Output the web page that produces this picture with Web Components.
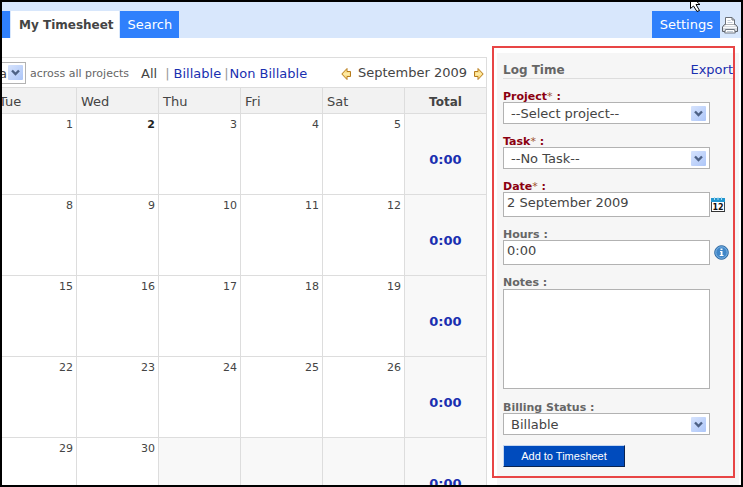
<!DOCTYPE html>
<html lang="en">
<head>
<meta charset="utf-8">
<title>My Timesheet</title>
<style>
  body {
    margin: 0;
    font-family: "DejaVu Sans", Verdana, sans-serif;
    font-size: 13px;
    line-height: 16px;
    color: #444;
    background: #fff;
    --link: #1a2fb0;
  }
</style>
</head>
<body>
<timesheet-app></timesheet-app>

<script>
const ICONS = {
  printer: `<svg width="16" height="18" viewBox="0 0 16 18">
    <path d="M3.500 9V1.500h6.500l2.500 2.500V9z" fill="#fff" stroke="#6b7078" />
    <path d="M10 1.500V4h2.500" fill="none" stroke="#6b7078" />
    <path d="M5.500 4.500h3M5.500 6.500h5" fill="none" stroke="#c3ccd8" />
    <path d="M2.500 8.500h11l2 2.500v4.500H.5V11z" fill="#d9dde3" stroke="#5c6169" stroke-linejoin="round" />
    <path d="M3.500 8.500h9v1.500h-9z" fill="#fff" />
    <path d="M1 11.500h14" stroke="#f7f9fb" />
    <path d="M3.500 13.500h9l.8 3.500H2.700z" fill="#fff" stroke="#6f7680" />
    <path d="M5 15.500h6" stroke="#c3ccd8" />
  </svg>`,
  prev: `<svg width="11" height="14" viewBox="0 0 11 14">
    <path d="M6 1.500L.8 7 6 12.500V9.500h3.500v-5H6z" fill="#fbe08a" stroke="#b67a1c" stroke-linejoin="round" />
    <path d="M3 7h5" stroke="#fff3c4" />
  </svg>`,
  next: `<svg width="11" height="14" viewBox="0 0 11 14">
    <path d="M5 1.500L10.200 7 5 12.500V9.500H1.500v-5H5z" fill="#fbe08a" stroke="#b67a1c" stroke-linejoin="round" />
    <path d="M3 7h5" stroke="#fff3c4" />
  </svg>`,
  calendar: `<svg width="14" height="15" viewBox="0 0 14 15">
    <rect x=".5" y="1.500" width="13" height="13" fill="#fff" stroke="#3b4650" />
    <rect x="0" y="1" width="14" height="4" fill="#2196cf" />
    <path d="M3.500 0v3M7 0v3M10.500 0v3" stroke="#a8dcf5" />
    <path d="M0 14.500h14" stroke="#333" />
    <text x="7" y="12.500" text-anchor="middle" font-family="DejaVu Sans" font-weight="bold" font-size="8" fill="#111">12</text>
  </svg>`,
  info: `<svg width="15" height="15" viewBox="0 0 15 15">
    <circle cx="7.500" cy="7.500" r="6.800" fill="#3f86c8" stroke="#2b669f" />
    <circle cx="7.500" cy="7.500" r="5.700" fill="none" stroke="#8fc0ea" stroke-width=".8" />
    <path d="M6.500 3.500h2v1.500h-2zM6 6h2.500v4h1v1H5.700v-1h1V7H6z" fill="#fff" />
  </svg>`,
  cursor: `<svg width="14" height="10" viewBox="0 0 14 10">
    <path d="M1.500 -6V6.500L4.500 4L8 9.500L10.500 8.500L7 2.500H11z" fill="#fff" stroke="#000" />
  </svg>`,
};

class UiIcon extends HTMLElement {
  constructor() {
    super();
    this.attachShadow({ mode: "open" });
  }

  connectedCallback() {
    this.shadowRoot.innerHTML = `
      <style>
        :host { display: inline-flex; flex: none; }
        svg { display: block; }
      </style>
      ${ICONS[this.getAttribute("name")] || ""}`;
  }
}

// Drop-down with a pale blue arrow button
class SelectBox extends HTMLElement {
  constructor() {
    super();
    this.attachShadow({ mode: "open" });
  }

  connectedCallback() {
    const label = this.getAttribute("label");
    this.shadowRoot.innerHTML = `
      <style>
        :host { display: block; }
        label { display: block; height: 13px; font-size: 11px; line-height: 15px; font-weight: bold; color: var(--label-color, #666); }
        label span { font-weight: normal; color: #a0522d; }
        .box { display: grid; align-items: center; }
        select, .arrow { grid-area: 1 / 1; }
        select {
          appearance: none;
          box-sizing: border-box;
          width: 100%;
          height: 22px;
          margin: 0;
          padding: 2px 22px 0 7px;
          border: 1px solid #b2b2b2;
          border-radius: 0;
          background: #fff;
          color: #444;
          font: inherit;
        }
        :host([compact]) select { padding: 2px 16px 0 4px; }
        .arrow { justify-self: end; margin-right: 4px; pointer-events: none; display: block; }
        :host([compact]) .arrow { margin-right: 3px; }
      </style>
      ${label ? `<label for="control">${label}${this.hasAttribute("required") ? "<span>*</span>" : ""} :</label>` : ""}
      <div class="box">
        <select id="control" ${label ? "" : 'aria-label="View"'}><option>${this.getAttribute("value")}</option></select>
        <svg class="arrow" width="15" height="15" viewBox="0 0 15 15">
          <defs><linearGradient id="g" x2="1" y2="1"><stop stop-color="#d6e3fd" /><stop offset="1" stop-color="#adc6f8" /></linearGradient></defs>
          <rect width="15" height="15" rx="1" fill="url(#g)" />
          <path d="M4 5.500l3.500 3.500L11 5.500" fill="none" stroke="#4d6185" stroke-width="2.400" />
        </svg>
      </div>`;
  }
}

// Label above an input or textarea, slotted icon on the right
class TextField extends HTMLElement {
  constructor() {
    super();
    this.attachShadow({ mode: "open" });
  }

  connectedCallback() {
    const control = this.hasAttribute("multiline")
      ? `<textarea id="control"></textarea>`
      : `<input id="control" type="text" value="${this.getAttribute("value") || ""}">`;
    this.shadowRoot.innerHTML = `
      <style>
        :host { display: block; }
        label { display: block; height: 13px; font-size: 11px; line-height: 15px; font-weight: bold; color: var(--label-color, #666); }
        label span { font-weight: normal; color: #a0522d; }
        .box { position: relative; }
        input, textarea {
          display: block;
          box-sizing: border-box;
          width: 100%;
          height: 25px;
          margin: 0;
          padding: 0 3px 4px;
          border: 1px solid #b2b2b2;
          border-radius: 0;
          background: #fff;
          color: #444;
          font: inherit;
        }
        textarea { height: 100px; margin: 1px 0; resize: none; }
        ::slotted(*) { position: absolute; left: 100%; top: 5px; margin-left: var(--icon-gap, 1px); }
      </style>
      <label for="control">${this.getAttribute("label")}${this.hasAttribute("required") ? "<span>*</span>" : ""} :</label>
      <div class="box">${control}<slot></slot></div>`;
  }
}

class TabBar extends HTMLElement {
  constructor() {
    super();
    this.attachShadow({ mode: "open" });
    this.shadowRoot.innerHTML = `
      <style>
        :host { display: flex; align-items: flex-end; gap: 1px; height: 36px; background: #d8e7fc; position: relative; }
        a {
          box-sizing: border-box;
          height: 27px;
          padding: 6px 7px 5px 8px;
          background: #2f80fc;
          color: #fff;
          text-decoration: none;
        }
        a.cut { width: 8px; padding: 0; }
        a.active { padding: 6px 5px 5px 8px; background: #fff; color: #444; font-size: 12px; font-weight: bold; }
        .spacer { flex: 1; }
        .print { padding: 0 3px 4px 1px; border: 0; background: none; display: flex; }
        .cursor { position: absolute; right: 38px; top: 0; }
      </style>
      <a class="cut" href="#" aria-label="Previous tab"></a>
      <a class="active" href="#">My Timesheet</a>
      <a href="#">Search</a>
      <div class="spacer"></div>
      <a href="#">Settings</a>
      <button class="print" aria-label="Print"><ui-icon name="printer"></ui-icon></button>
      <ui-icon class="cursor" name="cursor"></ui-icon>`;
  }
}

const DAYS = ["Tue", "Wed", "Thu", "Fri", "Sat"];
const WEEKS = [
  [1, 2, 3, 4, 5],
  [8, 9, 10, 11, 12],
  [15, 16, 17, 18, 19],
  [22, 23, 24, 25, 26],
  [29, 30, null, null, null],
];
const TODAY = 2;

class MonthCalendar extends HTMLElement {
  constructor() {
    super();
    this.attachShadow({ mode: "open" });
    const dayCell = (d) =>
      d === null ? `<td class="out"></td>` : `<td class="${d === TODAY ? "today" : ""}">${d}</td>`;
    const rows = WEEKS.map(
      (week) => `<tr>${week.map(dayCell).join("")}<td class="total">0:00</td></tr>`
    ).join("");

    this.shadowRoot.innerHTML = `
      <style>
        :host { display: block; overflow: hidden; }
        .toolbar {
          display: flex;
          align-items: center;
          height: 29px;
          border: solid #ddd;
          border-width: 1px 1px 1px 0;
          white-space: nowrap;
        }
        select-box { width: 32px; margin-left: -8px; }
        small { font-size: 11px; color: #666; padding-top: 2px; margin: 0 12px 0 4px; }
        .filters { display: flex; flex: 1; padding-top: 2px; color: #444; }
        .filters i { font-style: normal; color: #999; }
        .filters i:nth-of-type(1) { margin: 0 4px 0 8px; }
        .filters i:nth-of-type(2) { margin: 0 1px 0 3px; }
        a { color: var(--link); text-decoration: none; }
        .month { display: flex; align-items: center; gap: 6px; padding-right: 2px; }
        .month button { padding: 2px 0 0; border: 0; background: none; display: flex; }
        table {
          width: calc(100% + 7px);
          margin-left: -7px;
          table-layout: fixed;
          border-collapse: separate;
          border-spacing: 0;
        }
        th, td { border: solid #ddd; border-width: 0 1px 1px 0; }
        th { height: 23px; padding: 2px 4px 0; text-align: left; font-weight: normal; background: #f2f2f2; }
        th:last-child { text-align: center; font-size: 12px; font-weight: bold; }
        td { box-sizing: content-box; vertical-align: top; text-align: right; font-size: 11px; }
        td:not(.total) { padding: 3px 3px 0 0; height: 77px; }
        .today { font-weight: bold; color: #222; }
        .out { background: #f8f8f8; }
        .total { padding: 38px 0 0; height: 42px; text-align: center; font-size: 13px; font-weight: bold; color: var(--link); background: #f8f8f8; }
      </style>
      <div class="toolbar">
        <select-box compact value="a"></select-box>
        <small>across all projects</small>
        <div class="filters"><span>All</span><i>|</i><a href="#">Billable</a><i>|</i><a href="#">Non Billable</a></div>
        <div class="month">
          <button aria-label="Previous month"><ui-icon name="prev"></ui-icon></button>
          <span>September 2009</span>
          <button aria-label="Next month"><ui-icon name="next"></ui-icon></button>
        </div>
      </div>
      <table>
        <thead><tr>${DAYS.map((d) => `<th>${d}</th>`).join("")}<th>Total</th></tr></thead>
        <tbody>${rows}</tbody>
      </table>`;
  }
}

class LogTimePanel extends HTMLElement {
  constructor() {
    super();
    this.attachShadow({ mode: "open" });
    this.shadowRoot.innerHTML = `
      <style>
        :host { display: block; box-sizing: border-box; padding: 9px 6px; background: #f6f6f6; position: relative; }
        header { display: flex; justify-content: space-between; border-bottom: 1px solid #ddd; }
        h2 { margin: 0; font-size: 12px; line-height: 16px; color: #666; }
        a { color: var(--link); text-decoration: none; }
        form { display: grid; gap: 10px; margin: 10px 23px 0 0; }
        [required] { --label-color: #8b0010; }
        .hours { --icon-gap: 4px; }
        button {
          justify-self: start;
          width: 122px;
          height: 22px;
          padding: 0;
          border: solid;
          border-width: 1px;
          border-color: #c5d6f0 #0a2350 #0a2350 #c5d6f0;
          background: #004bbd;
          color: #fff;
          font: 11px "Liberation Sans", Arial, sans-serif;
        }
        .highlight {
          position: absolute;
          inset: -7px 4px 7px -5px;
          border: 2px solid #e84545;
          pointer-events: none;
        }
      </style>
      <header><h2>Log Time</h2><a href="#">Export</a></header>
      <form>
        <select-box label="Project" value="--Select project--" required></select-box>
        <select-box label="Task" value="--No Task--" required></select-box>
        <text-field label="Date" value="2 September 2009" required><ui-icon name="calendar"></ui-icon></text-field>
        <text-field class="hours" label="Hours" value="0:00"><ui-icon name="info"></ui-icon></text-field>
        <text-field label="Notes" multiline></text-field>
        <select-box label="Billing Status" value="Billable"></select-box>
        <button type="button">Add to Timesheet</button>
      </form>
      <div class="highlight"></div>`;
  }
}

class TimesheetApp extends HTMLElement {
  constructor() {
    super();
    this.attachShadow({ mode: "open" });
    this.shadowRoot.innerHTML = `
      <style>
        :host {
          display: flex;
          flex-direction: column;
          box-sizing: border-box;
          height: 100vh;
          border: 2px solid #000;
          overflow: hidden;
        }
        tab-bar { flex: none; }
        main { flex: 1; min-height: 0; display: flex; gap: 10px; padding-right: 2px; }
        month-calendar { flex: 1; min-width: 0; margin-top: 19px; }
        log-time-panel { flex: none; width: 242px; margin-top: 15px; }
      </style>
      <tab-bar></tab-bar>
      <main>
        <month-calendar></month-calendar>
        <log-time-panel></log-time-panel>
      </main>`;
  }
}

customElements.define("ui-icon", UiIcon);
customElements.define("select-box", SelectBox);
customElements.define("text-field", TextField);
customElements.define("tab-bar", TabBar);
customElements.define("month-calendar", MonthCalendar);
customElements.define("log-time-panel", LogTimePanel);
customElements.define("timesheet-app", TimesheetApp);
</script>
</body>
</html>
